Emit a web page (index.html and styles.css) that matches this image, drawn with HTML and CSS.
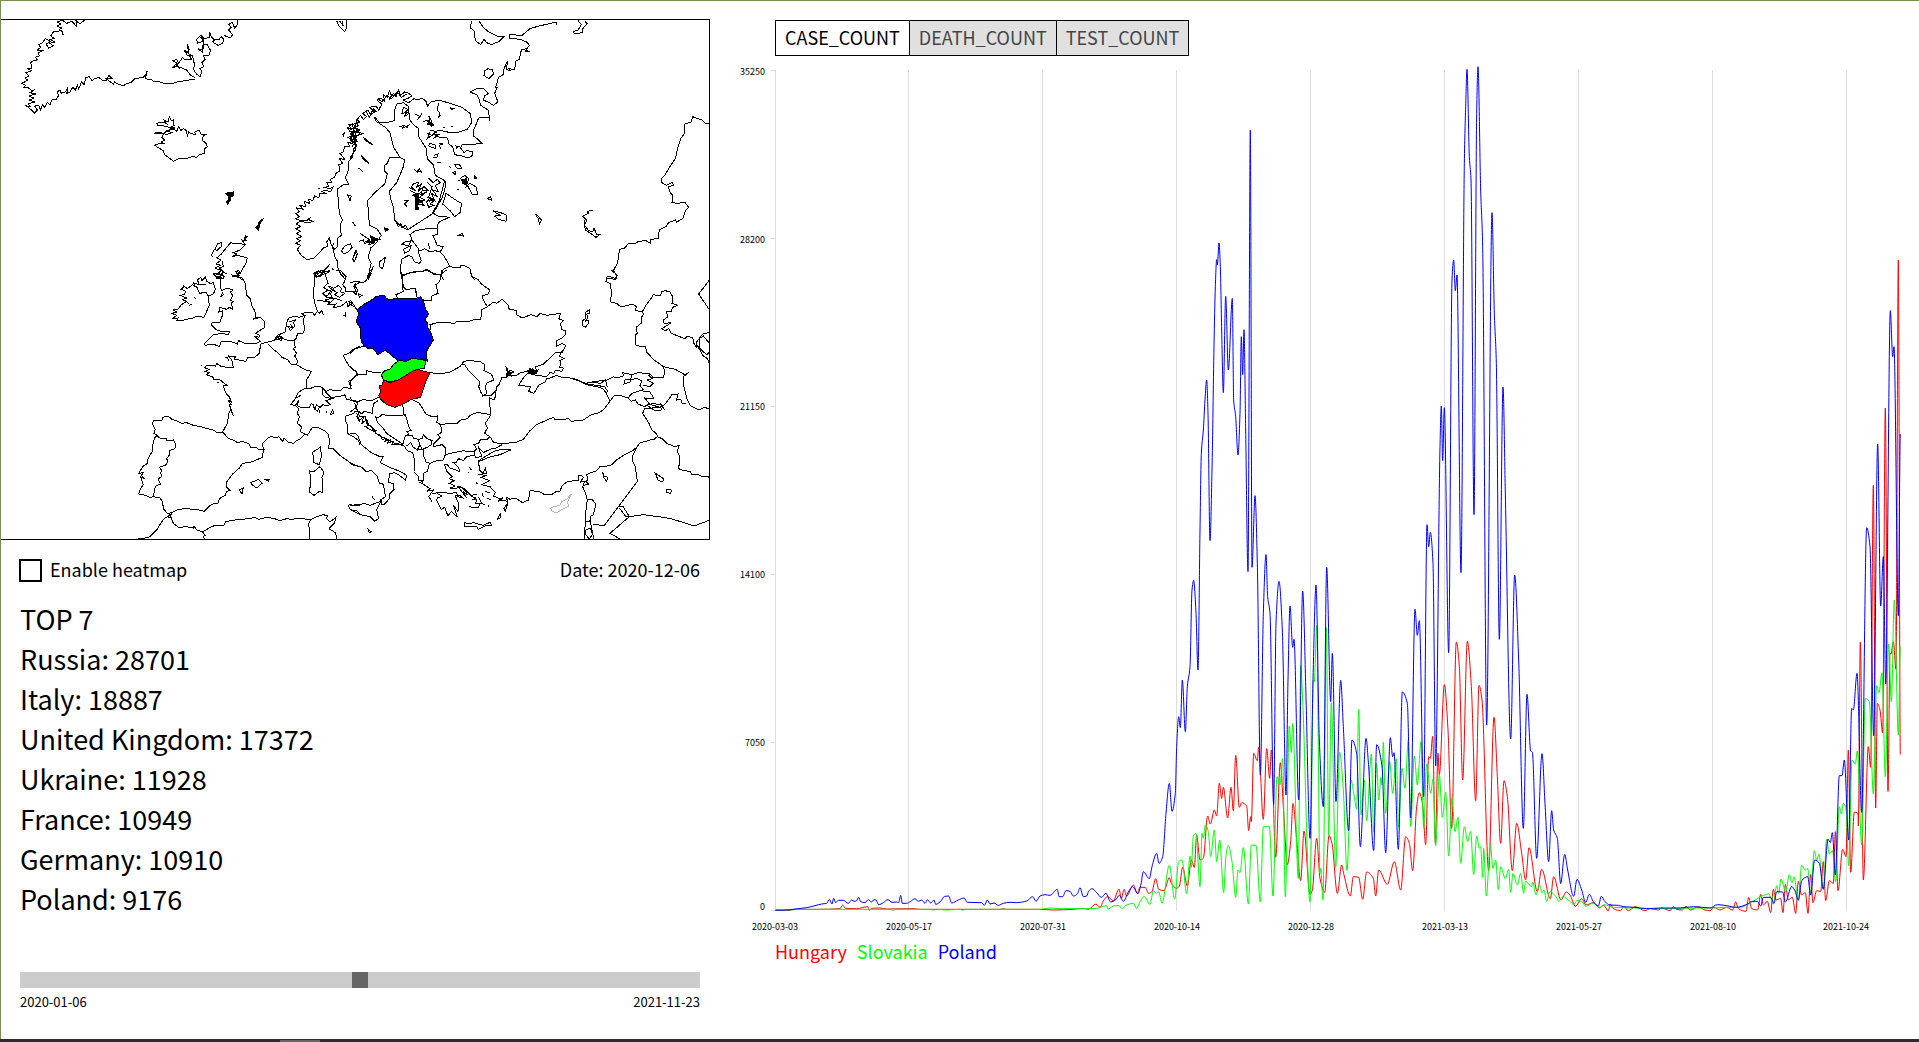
FILE: index.html
```html
<!DOCTYPE html>
<html lang="en">
<head>
<meta charset="utf-8">
<title>Epidemic map of Europe</title>
<link rel="stylesheet" href="styles.css">
</head>
<body>
<main class="layout">
  <section class="overview">
    <svg class="map" viewBox="1 19 709 521" role="img" aria-label="Map of Europe">
      <g transform="scale(.33333)">
        <path d="M256 58L240 72L228 62L230 80L216 64L200 70L186 60L172 66L184 72L170 78L186 84L176 90L188 96L190 106L184 92L160 96L152 108L164 116L148 118L166 126L150 130L160 138L146 144L138 132L152 124L136 116L128 128L116 134L122 142L112 150L128 152L114 160L118 168L106 172L112 180L100 182L92 188L96 204L84 206L94 212L78 218L86 228L74 234L84 240L66 250L76 256L72 262L86 264L96 272L106 268L90 278L108 282L86 288L102 294L88 300L104 306L84 312L92 320L80 318L92 328L104 340L112 330L104 318L116 316L122 330L128 314L134 322L142 308L150 314L156 300L168 300L176 286L172 276L180 270L184 280L196 276L204 262L200 280L210 276L218 262L226 270L232 256L236 268L244 246L252 254L258 232L268 230L276 242L284 236L296 232L306 240L318 242L326 226L336 236L318 236L340 252L344 246L356 254L372 256L382 250L392 248L404 236L430 232L436 226L442 212L436 236L456 240L462 246L480 246L496 252L516 252L530 246L540 246L552 242L584 238"/>
        <path d="M584 232L572 226L560 210L546 204L530 198L518 204L528 192L538 206L530 188L518 182L530 178L536 190L548 172L554 180L576 180L570 170L578 166L562 166L552 150L566 160L562 132L568 150L560 156L578 170L584 196L580 208L590 222L600 230L606 214L600 206L612 200L606 188L616 178L610 166L626 168L632 152L622 134L610 132L606 150L594 146L608 158L612 118L598 110L590 118L592 130L608 124L602 106L614 116L628 112L628 96L634 110L644 120L638 126L654 136L668 130L672 118L664 110L656 120L640 118M672 106L690 114L698 104L686 90L694 82L686 74L696 66L704 84L714 72L714 60M1010 62L1018 80L1034 94L1040 84L1040 60M1018 62L1030 78L1026 62"/>
        <path d="M461 400L478 396L500 404L516 398L500 392L490 400L512 388L524 384L498 380L486 376L474 378L470 370L488 366L500 372L492 360L504 366L508 350L514 362L520 360L522 376L510 384L524 390L530 394L536 380L542 392L550 386L560 392L562 410L566 396L572 400L586 404L584 396L596 390L604 404L620 402L610 408L606 420L618 430L622 440L612 448L614 460L598 464L590 472L578 470L556 476L536 476L520 484L508 474L494 464L490 452L470 440L464 436L478 430L496 432L482 426L494 420L486 412L490 402L476 400Z"/>
        <path class="solid" d="M676 580L700 576L700 588L690 590L692 600L682 614L680 606L688 594L682 586ZM788 658L778 664L774 676L766 682L776 690L780 672Z"/>
        <path d="M738 706L734 714L744 708L734 718L742 722L726 720L736 734L720 750L700 758L710 762L696 770L712 766L742 774L738 790L726 810L720 822L708 818L716 826L696 828L716 832L728 840M734 734L716 730L704 732L692 728L680 742L664 762L650 774L664 780L648 792L662 796L644 804L664 812L650 822L668 826L648 834L664 838M666 784L670 800L658 804L672 816L660 824L674 830M664 728L652 732L644 748L650 752L666 738ZM642 750L634 766L640 772"/>
        <path d="M1078 348L1072 360L1080 366L1062 372L1046 374L1054 386L1042 382L1050 394L1066 392L1050 402L1062 408L1044 412L1060 424L1044 428L1050 440L1034 440L1030 456L1020 460L1034 478L1018 476L1028 490L1016 494L1020 512L1008 520L1004 532L990 538L996 548L980 548L986 558L974 562L990 566L1000 560L992 576L976 570L966 574L980 582L960 580L956 594L944 588L938 602L926 598L928 610L914 604L916 620L900 616L910 628L890 624L898 636L888 640L898 650L886 656L904 662L920 662L934 650L926 660L938 664L926 668L900 664L888 672L902 680L888 686L902 694L890 700L904 710L890 716L902 722L888 730L902 736L892 748L904 766L920 778L940 776L960 756L970 744L984 738L980 726L988 714L994 736L1004 748L1012 740L1012 716L1024 706L1020 676L1028 660L1018 640L1014 590L1014 566L1030 554L1046 552L1036 534L1046 508L1046 484L1058 470L1060 448L1070 438L1062 420L1066 400L1080 390M1056 368L1062 396L1052 420L1070 412L1060 386L1076 376M1028 404L1034 398L1030 408ZM954 566L960 564"/>
        <path d="M1000 728L998 740L1004 770L1014 786L1012 800L1022 822L1038 840M1024 752L1036 736L1052 732L1056 744L1044 756L1032 762ZM1066 752L1058 776L1064 784L1072 760ZM1042 584L1054 588L1050 602L1046 592ZM1058 666L1066 678M990 792L972 810L950 816L942 834L964 812L976 820L958 830ZM996 806L1000 810"/>
      </g>
      <g transform="translate(350 0) scale(.33333)">
        <path d="M0 376L20 370L10 384L28 388L14 396L40 400L20 408L6 402L0 414L22 424L4 430L18 436L16 450L0 474M0 390L24 378L18 360L32 346L40 358L50 350L38 340L54 330L62 344L74 336L60 322L78 318L86 330L96 312L80 300L92 294L104 304L100 284L112 292L118 272L124 286L118 300L130 280L138 290L146 270L152 286L164 276L176 280L186 288L172 296L160 300L176 308L192 296L204 300L216 294L230 306L232 320L242 306L266 300L300 310L336 322L360 340L366 366L352 388L320 398L292 396L264 390L250 402L270 412L292 414L298 434L308 440L314 464L336 468L356 474L368 466L366 454L350 452L342 458L332 444L336 434L360 434L396 430L384 418L370 408L372 388L386 354L416 352L420 362L414 330L392 316L388 300L380 284L360 276L384 264L400 266L416 280L404 288L400 300L418 308L430 316L444 306L434 280L442 262L436 264L446 232L462 222L462 206L472 184L470 208L484 204L474 212L494 208L498 182L508 178L514 150L530 146L526 156L540 156L528 150L538 136L530 126L510 118L478 114L480 102L514 108L540 86L560 80L618 66L620 74"/>
        <path d="M8 370L24 392L4 404L20 420L6 440M14 380L30 402L12 414M84 296L96 306L110 286L124 296L142 276L154 292L170 282M48 334L58 352L70 326L80 336"/>
        <path d="M364 62L362 84L372 92L376 122L392 134L402 118L410 128L424 134L448 124L462 110L440 108L416 96L400 82L386 62M404 212L414 206L428 210L430 222L416 236L402 226ZM684 62L694 74L684 90L668 96L678 102L696 98L700 82L712 72L704 62"/>
        <path d="M1080 360L1076 372L1066 370L1056 360L1044 356L1028 350L1024 366L1004 372L1002 402L992 416L984 440L976 476L960 500L944 526L934 536L936 548L950 556L968 546L970 556L956 560L958 574L968 586L966 608L984 610L1004 606L1016 622L1006 632L998 656L980 666L976 660L956 668L948 680L928 690L924 716L900 718L902 730L888 722L866 724L852 732L834 732L824 744L808 748L806 770L802 790L790 812L800 826L796 838L768 834"/>
        <path d="M146 474L118 474L112 490L102 498L104 514L112 522L104 552L72 580L62 592L52 602L56 640L58 676L80 686L94 706L78 730L62 744L58 760L54 770L64 790L58 810L56 840M150 472L164 480L160 500L152 520L140 548L118 574L124 604L130 620L134 660L150 676L172 690L200 672L246 642L268 602L284 542L256 526L250 494L232 476L228 444L206 410L206 386L190 374L178 358L176 320L160 308L140 312L134 330L132 362L110 368L86 366L74 350L76 362L106 382L120 398L130 440L150 472"/>
        <path d="M138 668L146 680L152 670L156 684L166 676L174 688M30 700L60 720L50 724L74 728L56 734L70 712L88 718L44 730L40 720L26 724M0 730L6 742L0 748M20 752L8 776L12 786L22 764ZM288 580L320 602L334 610L332 636L314 650L300 632L278 612L284 596ZM288 544L286 560L278 590L250 640L264 648L284 650L298 652L280 660L270 664L262 674L264 686"/>
        <path class="solid" d="M194 584L206 580L204 596L220 606L202 610L206 630L196 630L198 606ZM334 540L350 536L352 550L342 552ZM62 708L84 718L66 728ZM104 684L116 688L106 694ZM302 324L312 326L304 330ZM40 412L70 436L50 424ZM32 464L56 490L40 478ZM232 362L250 372L244 378Z"/>
        <path d="M176 562L196 572L184 560L190 552L206 546L200 562L216 550L204 574L220 560L212 584L232 574L208 592L226 600L210 602L222 616L204 612M180 572L198 580L188 586L202 592M230 592L246 596L236 604L256 600L240 612L252 616L236 622L230 606L244 590M160 322L176 330L166 334L178 340L162 350L170 338L156 340ZM196 342L210 350L202 360L216 340M220 364L240 360L236 348L246 366L230 372L252 376M230 400L246 406L232 416L240 396M148 380L164 376L158 384L176 376L170 384M26 504L38 514M162 602L174 602L164 612L172 620M194 508L202 518L208 506L214 516L200 512"/>
        <path d="M266 308L262 330L270 340L264 354L272 346M208 580L220 570L234 572L222 560M236 534L250 548L262 538L270 548L256 556L266 576L248 570L262 590L244 580L254 602L236 590L246 560L232 548M240 430L258 436L256 446L236 438ZM252 466L264 462L260 474L248 472M240 390L262 396L246 404L266 404L250 416M278 382L286 384M304 378L308 380M266 430L280 432L268 436L272 446M260 486L272 488M318 438L326 440L320 444ZM330 536L344 526L356 536L348 560L360 550L380 562L382 584L366 582L352 556L336 550M324 540L330 542M320 570L326 570M314 494L328 494L336 504L322 506ZM308 518L318 514L316 524ZM298 500L304 502M374 528L380 534L374 536ZM412 596L422 590L424 600ZM428 632L452 638L470 646L468 664L446 658L434 648L450 646ZM556 642L566 650L574 660L568 674L566 658ZM728 630L712 634L716 640L698 648L710 660L704 676L716 692L728 696L732 684L740 704L752 702L738 712L722 700L706 690L702 660M326 706L338 700L340 708Z"/>
        <path d="M264 686L230 686L196 692L180 704L186 720L204 744L206 754L224 746L240 756L256 752L270 756L280 740L262 736L248 706L262 704L264 686M204 752L214 782L208 790L194 786L186 770L176 766L154 778L152 806L154 838M154 826L190 816L216 816L230 808L250 820L274 826L278 810L298 798L290 782L282 768L270 756M274 826L280 840M298 798L312 804L330 804L332 798L344 798L360 806L364 826L374 840M164 726L184 722L176 736L156 734ZM160 748L184 736L178 752L164 760ZM236 730L238 746M90 784L106 772L98 806L88 800ZM70 798L56 836L64 820"/>
      </g>
      <g transform="translate(0 270) scale(.33333)">
        <path d="M694 14L712 20L726 24L736 40L738 60L740 76L752 88L754 104L764 122L768 142L758 148L780 142L794 154L792 174L778 182L768 190L780 196L776 202L764 198L776 210L782 214L770 220L740 222L716 212L712 222L690 214L664 214L658 230L640 222L616 226L612 222L626 208L640 194L668 190L684 194L690 184L672 186L650 180L634 164L636 158L660 156L668 134L668 122L656 126L660 112L680 118L688 112L698 118L694 100L700 94L690 92L698 76L690 66L700 60L680 54L664 62L660 36L664 22L644 18L660 8L640 12L654 22L668 14L672 26L656 26L668 6L680 12M706 4L724 8L712 0M668 68L662 80L670 74Z"/>
        <path d="M548 46L562 56L578 44L590 50L596 64L600 70L618 66L624 78L640 72L646 58L640 38L630 40L620 34L616 22L606 32L602 22L592 30L598 44L580 38L586 52M596 44L618 42M624 78L626 90L628 106L620 124L612 142L590 138L578 144L552 150L530 152L534 144L518 146L530 136L516 130L532 126L518 120L534 118L544 104L558 96L548 88L560 84L540 76L552 74L558 64L544 58L552 50M568 106L576 102M584 82L586 88M552 90L566 100"/>
        <path d="M804 216L782 222L778 250L764 262L744 262L738 274L716 270L702 270L706 260L686 258L696 272L700 294L680 294L674 290L664 290L650 280L646 288L634 286L618 288L614 294L628 298L616 304L626 308L620 314L640 322L642 330L660 330L676 342L684 348L670 346L674 362L680 372L688 380L694 396L684 390L694 404L688 404L694 420L700 438L692 418L686 432L682 460L668 486L652 488L640 480L622 476L604 470L580 466L560 458L546 460L534 454L516 448L504 438L488 442L486 450L460 452L458 462L466 478L462 490L472 496L464 504L458 526L456 546L444 566L442 580L428 590L416 610L430 608L424 616L434 626L422 620L430 644L422 656L416 672L436 676L450 682L460 680L480 684L488 696L490 716L502 730L516 728L532 720L552 716L590 718L612 724L628 708L640 702L654 700L658 686L676 676L680 664L690 662L680 652L680 636L698 612L718 594L728 580L754 576L788 562L790 540L788 520L806 502L816 500L830 504L836 500L848 514L852 504L864 516L880 520L890 512L900 508L914 492L902 486L904 470L892 460L898 440L892 430L896 416L886 406M668 486L686 506L704 512L712 518L728 514L748 522L752 532L770 534L778 540L794 540M602 288L606 288M674 264L682 262M686 272L682 262M650 336L656 338"/>
        <path d="M466 494L480 504L500 506L500 512L520 510L528 526L524 536L508 542L510 552L500 566L504 576L496 586L478 592L484 600L482 610L486 618L474 628L482 642L468 648L464 656L460 680M392 810L436 804L450 800L470 780L490 748L502 740L514 732L510 744L504 740M508 728L514 744L520 760L536 772L560 770L580 774L582 768L592 782L606 784L616 796L610 800L614 810M608 786L630 772L646 766L672 766L676 756L690 752L720 748L750 746L764 742L776 748L800 742L824 746L840 752L860 746L876 748L900 744L930 750L946 742L970 734L984 738L978 744L990 756L1008 742L1004 758L990 772L990 778L1006 788L1012 810M932 750L926 760L930 800L926 810"/>
        <path d="M914 492L922 496L936 474L956 474L976 484L984 492L990 516L984 534L1000 536L1020 556L1050 578L1060 586L1080 590M962 528L960 540L966 552L958 584L942 578L938 546L956 536ZM928 602L940 606L960 590L972 606L966 622L968 668L958 664L942 676L928 666L932 640L932 620ZM752 638L776 628L786 640L770 654L758 646ZM794 628L806 634L808 628ZM718 660L730 654L726 672ZM1046 702L1058 706L1070 702L1080 704M1046 704L1048 716L1080 734M1080 426L1064 424L1062 430L1038 438L1036 450L1044 470L1042 490L1060 500L1074 510L1080 524"/>
        <path d="M804 216L826 210L832 196L856 186L860 158L866 144L886 138L896 142L914 136L904 130L936 126L944 136L952 124L958 130L966 122L970 134M952 124L944 100L940 72L944 30L942 10L956 2M914 136L910 150L914 178L908 190L892 190L890 204L882 212L886 232L880 236L890 250L884 258L892 272L890 284L874 284L864 270L846 262L836 250L820 238L804 222M826 210L846 204L860 210L882 212M890 284L910 296L918 300L934 304L920 330L918 354M868 156L886 150L880 158L884 168L872 182L864 170L878 172L870 162M824 202L844 198L828 206L846 212L836 194L848 204L822 210"/>
        <path d="M918 354L896 366L886 386L872 404L886 406L896 392L892 406L904 414L928 412L934 400L940 404L944 416L950 404L960 412L968 404L980 408L990 404L978 392L996 386L976 382L966 372L968 354L956 348L944 350L930 356L918 354M968 354L978 364L990 358L1000 362L1020 362L1032 352L1054 356L1048 340L1060 324L1074 314L1066 304L1048 290L1040 276L1030 256L1046 250L1060 238L1080 228M976 366L992 382L1016 380L1034 374L1040 388L1062 392L1080 396M996 422L990 436M998 418L1000 430L994 434M978 424L982 428M940 410L952 424L956 416L960 430M888 384L902 376M1062 390L1074 400L1066 412L1076 430L1070 440L1080 456"/>
        <path d="M942 30L946 8L962 4L964 12L950 22L944 12L990 2M990 2L976 14L984 40L970 52L984 60L968 70L980 82L996 84L976 90L990 100L1000 88L992 72L998 60L986 50L1000 52M978 58L992 62L984 76L972 78M1002 54L1016 46L1024 56L1022 66L1034 70L1018 82L1004 74L1012 68L1002 62ZM950 90L990 96L984 104L1008 102L1000 112L1020 110L1040 96L1044 110L1050 104L1046 94L1058 100L1072 120M1008 0L1020 0L1038 20L1034 34L1028 44L1036 54L1036 66L1060 66L1068 74L1074 60L1064 48L1080 36M1028 136L1034 138M1038 126L1036 142M1000 84L1026 92"/>
      </g>
      <g transform="translate(350 270) scale(.33333)">
        <path class="poland" d="M22 118L44 102L62 92L78 80L94 76L104 76L108 84L116 90L140 84L170 86L200 84L212 80L222 98L226 116L236 132L224 150L234 160L234 176L240 182L250 210L238 230L228 246L232 274L218 266L202 270L180 266L172 274L146 274L132 262L122 254L106 240L94 248L84 254L68 234L56 236L42 228L34 214L32 200L30 172L18 154L26 134Z"/>
        <path class="slovakia" d="M146 272L170 274L184 266L216 268L228 274L222 296L200 298L182 306L162 320L144 330L120 336L100 330L94 314L104 302L120 298L130 284Z"/>
        <path class="hungary" d="M100 330L120 338L144 330L162 320L182 306L202 298L222 304L240 308L232 324L224 344L212 382L184 388L160 402L134 412L110 404L94 390L86 376L92 364L88 348L98 344Z"/>
        <path d="M0 382L6 392L20 396L40 388L54 392L70 390L90 380M0 354L4 346L-4 334L4 330L20 314L48 314L50 302L72 308L94 308M0 250L12 238L30 232L44 228M0 290L20 306L24 314M14 400L24 424L36 432L42 424L68 430L68 416L72 400L84 392M14 400L20 412L0 426M20 430L28 450L40 442L36 460L50 448L56 466L46 470L70 484L64 470L78 482L76 490L92 496L96 508L110 506L104 514L120 510L112 520L130 514L126 524L144 520L160 528M0 38L18 34L40 38L50 30L56 10L62 0M0 66L18 64L12 50L18 38M24 70L36 76L28 82ZM0 90L8 98L2 104L16 112L22 122"/>
        <path d="M152 0L156 20L160 50L166 58L196 56L200 80M142 84L138 74L160 64L156 44L166 56M154 20L180 8L216 4L230 0L250 12L270 14L276 10M276 0L274 16L268 36L258 44L264 70L246 78L246 92L224 92L214 86M200 64L200 82M276 10L290 0M360 0L366 20L384 28L394 42L420 60L414 72L396 78L402 94L412 110L396 118L392 148L370 150L350 156L320 154L314 160L270 156L240 164L242 178L234 180M412 110L430 96L440 100L456 88L476 106L474 116L500 122L500 134L516 144L544 134L560 140L570 130L590 136L632 130L626 146L640 152L632 160L634 178L646 182L646 194L636 204L620 212L620 228L636 220L648 226L638 246L616 248L600 264L578 284L556 290L560 304L552 302L540 296L546 312L530 304L512 308L500 316L472 318L468 322L456 322L448 342L440 350L438 362M466 288L474 300L470 316L492 306L478 300L484 318L468 310"/>
        <path class="solid" d="M534 302L548 296L552 304L564 300L558 312L544 308ZM468 298L478 308L488 306L478 316Z"/>
        <path d="M242 308L256 310L280 310L300 306L330 290L340 276L352 272L390 274L404 284L402 302L424 312L432 330L412 338L406 348L410 370L400 378L424 376L438 362L434 390L420 384L420 410L422 436L406 460L412 474L404 490L420 500L430 516L454 522L500 516L520 508L540 482L560 464L600 446L610 442L616 450L640 448L656 446L664 454L700 450L724 434L742 430L760 420L780 394L772 378L770 370L758 356L740 350L716 346L700 340L680 328L660 324L640 324L620 316L600 324L590 326L586 336L566 346L552 370L536 364L542 350L506 346L520 324L532 310L544 312L560 316L590 320L600 308L612 310L616 300L636 304L640 294L628 292L632 286L630 272L642 266L628 258L634 246L640 240M332 284L344 284L356 302L370 316L390 336L386 350L392 366L400 378"/>
        <path d="M184 388L208 400L228 432L246 440L262 438L264 450L258 456L272 464L300 460L320 462L332 450L352 446L360 436L380 428L404 430L422 436M272 464L276 486L264 494L270 502L262 510L250 522L250 530L276 524L286 534L286 554L320 546L340 542L360 546L372 544L380 536L372 524L386 520L392 508L412 508L420 500M154 402L162 416L160 432L168 440L176 470L184 482L170 484L176 492L166 498L158 524L140 524L110 506L84 496L64 470L50 460L46 440L28 440L24 424M76 440L84 444L96 434L130 438L168 434M76 440L84 460L96 470L110 490L160 524M166 498L186 496L190 504L204 508L210 524L202 540L188 530L182 518L170 528M204 508L216 506L220 494L232 506L246 512L244 524L232 532L216 538L210 524M160 524L172 542L188 548L194 570L192 606L206 620L204 632L220 630L216 640L240 656L230 664L250 660L236 680L246 694M246 672L262 668L280 666L300 672L320 666L322 680L338 684L330 676L316 678L326 700L324 724L310 706L322 742L304 724L294 738L284 712L274 718L260 690L262 684L276 678L260 670M202 540L220 540L222 560L228 576L240 580L260 572L280 570L286 554M238 580L232 604L220 610L220 632L206 640"/>
        <path d="M372 556L350 560L340 572L326 566L318 578L310 578L326 592L328 604L300 594L292 584L284 584L290 604L306 620L298 626L312 632L298 640L316 648L300 654L318 656L330 650L346 662L352 676L340 664L350 684L324 650L340 654L350 664L366 680L378 684L366 690L380 690L376 700L396 700L384 680M358 590L364 600M354 606L358 610M378 638L384 642M356 710L384 714L392 698M396 670L400 680M398 706L406 702M366 676L380 672M404 664L420 668M412 684L422 690M414 706L418 710M372 544L376 562L396 560L384 530L400 548L420 538L438 534L456 524M388 574L416 562L450 554L482 540L456 538L432 544L412 556L386 572L388 600L398 610L406 596L410 610L384 614L412 616L394 622L418 632L396 644L420 650L436 668L430 678L450 686L444 696L460 682L450 690L472 694L470 682L480 688L496 684L518 698L536 690L540 662L566 664L584 674L604 674L620 664L630 664L636 648L650 636L670 632L686 630L684 618L694 616L700 622L692 636L704 634L698 650L706 668L712 690L708 720L706 760L702 808M344 758L356 762L370 758L400 766L422 756L424 766L404 768L384 778L380 770L344 770ZM474 698L462 716L466 724ZM452 730L442 748L450 744Z"/>
        <path d="M0 490L18 492L24 498L34 524L64 548L90 560L100 560L90 578L118 592L150 604L170 616L166 630L148 616L132 608L118 612L116 638L130 640L132 658L118 672L120 684L104 702L96 704L92 690L106 680L104 660L98 640L88 640L80 616L64 602L48 604L36 592L16 586L0 578M0 706L28 706L40 700L60 706L92 694L80 718L86 746L74 754L60 740L30 734L20 722L4 722L0 716M54 778L64 786L58 788ZM66 680L74 690"/>
        <path d="M712 690L728 690L738 704L730 734L722 738L722 760L728 790L732 808M708 756L722 752M708 780L720 774L728 792L718 808L708 794ZM730 762L762 768L862 634L858 606L856 590L846 570L848 556L862 530L848 542L820 556L800 570L786 584L772 588L750 590L740 602L722 608L710 614L714 630L708 634L716 642L700 646M862 530L868 520L880 516L900 510L912 508L922 500L920 492L906 480L896 458L878 430L884 416L930 412M922 500L936 506L950 520L974 530L988 526L982 544L990 560L986 596L1000 602L1020 604L1026 614L1040 612L1056 620L1074 620L1080 626M806 710L818 708L838 740L826 738L808 714M838 740L880 734L940 742L970 748L1032 768L1080 750M838 740L780 790L812 808M700 812L734 812"/>
        <path d="M660 324L714 342L764 350L772 362L770 372M712 338L740 334L770 330L790 320L800 324L820 318L818 308L846 314L870 306L880 312L896 310L904 316L910 324L940 324L944 306L940 290M720 336L752 340L766 330L772 350M780 394L792 378L810 376L834 384L846 370L870 362L880 360L870 346L876 334L862 326L824 330L822 342L840 336L846 314M834 384L844 394L856 390L864 402L884 410L896 402L930 412L944 404L966 374L984 372L980 390L992 388L996 400L1008 400M870 362L900 366L912 386L884 384L900 404M880 346L900 350L910 340L890 330L908 326L896 316M890 406L908 400L940 406L934 420L916 422ZM930 400L944 420"/>
        <path d="M784 0L802 16L798 26L772 18L768 34L782 42L784 68L782 96L800 100L812 110L826 108L846 102L860 110L856 120L870 126L878 122L880 134L874 142L876 158L858 172L862 190L856 196L856 224L872 230L886 230L890 246L910 268L940 290L976 298L1004 314L1016 308L1002 318L1000 334L1002 350L1008 376L1012 390L1020 406L1048 420L1064 412L1080 418M876 128L888 106L900 90L910 74L932 78L934 66L946 62L960 66L968 80L966 100L982 106L968 112L964 124L948 126L954 140L940 150L942 160L964 158L936 176L946 182L956 176L964 190L984 198L1004 206L1010 200L1028 202L1032 220L1040 232L1040 216L1060 190L1080 188M1080 284L1072 266L1058 256L1040 222M1080 222L1060 198L1050 204L1048 230L1054 240L1070 254L1080 244M1080 28L1046 72L1080 122M720 118L706 128L708 144L698 152L698 168L706 172L716 160L716 150L706 154L714 142L710 132L720 130ZM916 610L938 624L942 630L936 636L924 630ZM950 658L964 660L962 670L950 668ZM758 606L762 618L774 622L770 634L762 624Z"/>
        <path class="faint" d="M602 714L612 710L630 706L636 694L650 688L664 672L652 698L656 708L640 716L620 728L606 724Z"/>
      </g>
      <path d="M1 19.500H709.500V539.500H1"/>
    </svg>

    <div class="map-options">
      <label class="heatmap"><input class="heatmap-box" type="checkbox">Enable heatmap</label>
      <span>Date: 2020-12-06</span>
    </div>

    <section class="ranking">
      <h2 class="ranking-title">TOP 7</h2>
      <ol class="ranking-list">
        <li>Russia: 28701</li>
        <li>Italy: 18887</li>
        <li>United Kingdom: 17372</li>
        <li>Ukraine: 11928</li>
        <li>France: 10949</li>
        <li>Germany: 10910</li>
        <li>Poland: 9176</li>
      </ol>
    </section>

    <div class="timeline">
      <input class="timeline-slider" type="range" min="0" max="100" value="50" aria-label="Date">
      <div class="timeline-ends"><span>2020-01-06</span><span>2021-11-23</span></div>
    </div>
  </section>

  <section class="statistics">
    <div class="tabs">
      <button class="tab tab-active" type="button">CASE_COUNT</button>
      <button class="tab" type="button">DEATH_COUNT</button>
      <button class="tab" type="button">TEST_COUNT</button>
    </div>
    <svg class="chart" viewBox="710 56 1209 881" role="img" aria-label="Daily cases">
      <path class="grid" d="M775.500 70V911M908.500 70V911M1042.500 70V911M1176.500 70V911M1310.500 70V911M1444.500 70V911M1578.500 70V911M1712.500 70V911M1846.500 70V911M771 70.500H775M771 238.500H775M771 406.500H775M771 574.500H775M771 742.500H775M771 910.500H775"/>
      <g class="y-labels">
        <text x="765" y="75">35250</text><text x="765" y="243">28200</text><text x="765" y="410">21150</text>
        <text x="765" y="578">14100</text><text x="765" y="746">7050</text><text x="765" y="910">0</text>
      </g>
      <g class="x-labels">
        <text x="775" y="930">2020-03-03</text><text x="909" y="930">2020-05-17</text><text x="1043" y="930">2020-07-31</text>
        <text x="1177" y="930">2020-10-14</text><text x="1311" y="930">2020-12-28</text><text x="1445" y="930">2021-03-13</text>
        <text x="1579" y="930">2021-05-27</text><text x="1713" y="930">2021-08-10</text><text x="1846" y="930">2021-10-24</text>
      </g>
      <path class="series series-hungary" id="hungary"/>
      <path class="series series-slovakia" id="slovakia"/>
      <path class="series series-poland" id="poland"/>
    </svg>
    <ul class="legend">
      <li class="legend-hungary">Hungary</li>
      <li class="legend-slovakia">Slovakia</li>
      <li class="legend-poland">Poland</li>
    </ul>
  </section>
</main>
<footer class="dock"><span class="dock-item"></span></footer>
<script src="chart.js"></script>
</body>
</html>
```
FILE: styles.css
```css
* { box-sizing: border-box; }

body {
  margin: 0;
  min-height: 100vh;
  display: flex;
  flex-direction: column;
  background: #fff;
  color: #000;
  font-family: "Noto Sans CJK SC", "Noto Sans", sans-serif;
  font-size: 18px;
  line-height: 20px;
}

.layout {
  flex: 1;
  display: grid;
  grid-template-columns: minmax(0, 709fr) minmax(0, 1209fr);
  border-top: 1px solid #789058;
  border-left: 1px solid #789058;
}

.overview { padding-top: 18px; }

.map { display: block; width: 100%; }
.map path {
  fill: none;
  stroke: #000;
  stroke-width: 1px;
  vector-effect: non-scaling-stroke;
  shape-rendering: crispEdges;
}
.map .solid { fill: #000; }
.map .poland { fill: #00f; }
.map .slovakia { fill: #0f0; }
.map .hungary { fill: #f00; }
.map .faint { stroke: #bbb; }

.map-options {
  display: flex;
  justify-content: space-between;
  align-items: flex-start;
  margin: 19px 10px 0 18px;
}
.heatmap { display: flex; align-items: flex-start; gap: 8px; }
.heatmap-box {
  appearance: none;
  width: 23px;
  height: 23px;
  margin: 0;
  border: 2px solid #000;
  background: #fff;
}
.heatmap-box:checked { background: #666; }

.ranking {
  margin: 17px 19px 0;
  font-size: 27px;
  line-height: 40px;
}
.ranking-title { margin: 0; font-size: 27px; font-weight: 400; }
.ranking-list { margin: 0; padding: 0; list-style: none; }

.timeline { margin: 53px 10px 0 19px; }
.timeline-slider {
  display: block;
  appearance: none;
  width: 100%;
  height: 16px;
  margin: 0;
  background: #ccc;
}
.timeline-slider::-webkit-slider-thumb {
  appearance: none;
  width: 16px;
  height: 16px;
  background: #666;
}
.timeline-ends {
  display: flex;
  justify-content: space-between;
  margin-top: 4px;
  font-size: 13px;
}

.statistics { padding-top: 19px; }
.tabs { display: flex; margin-left: 65px; }
.tab {
  height: 36px;
  margin: 0 -1px 0 0;
  padding: 0 9px 2px;
  border: 1px solid #000;
  background: #e0e0e0;
  color: #444;
  font: inherit;
}
.tab-active { background: #fff; color: #000; }

.chart { display: block; width: 100%; font-size: 9px; }
.grid { fill: none; stroke: #ddd; }
.y-labels { text-anchor: end; }
.x-labels { text-anchor: middle; }
.series { fill: none; stroke-width: 1px; }
.series-hungary { stroke: #f00; }
.series-slovakia { stroke: #0f0; }
.series-poland { stroke: #00f; }

.legend {
  display: flex;
  gap: 10px;
  margin: 0 0 0 65px;
  padding: 0;
  list-style: none;
  line-height: 28px;
}
.legend-hungary { color: #f00; }
.legend-slovakia { color: #0f0; }
.legend-poland { color: #00f; }

.dock { height: 3px; padding: 1px 0 0 280px; background: #2e2b2e; }
.dock-item { display: block; width: 40px; height: 2px; background: #666; }
```
FILE: chart.js
```js
// Each series is split in three periods; every period has its own origin and
// holds x,y pairs in thirds of a chart unit.
const origins = [[740, 840], [1080, 480], [1480, 680]];

const series = {
  poland: [
    "106,211 150,209 175,206 200,203 225,197 245,192 260,190 268,178 276,192 281,175 287,188 295,181 310,181 325,190 335,180 342,184 350,182 356,172 362,185 375,188 385,179 395,186 402,179 408,180 416,194 430,188 444,179 456,187 470,186 476,188 482,166 487,190 500,190 512,184 525,176 535,184 545,180 555,190 562,179 572,189 582,180 587,193 600,186 614,169 626,168 635,189 655,180 672,174 682,187 725,188 733,196 742,180 750,192 762,189 775,196 790,190 810,187 830,188 860,183 878,170 888,184 900,168 915,164 930,166 952,148 957,170 968,170 978,152 990,154 1000,168 1012,162 1020,143 1030,170",
    "20,1248 26,1234 36,1226 50,1238 64,1252 78,1240 92,1266 106,1260 118,1246 130,1264 145,1236 158,1220 174,1241 183,1212 190,1175 208,1196 216,1160 230,1120 237,1150 248,1130 258,1000 268,910 276,994 286,940 290,800 296,710 301,743 307,600 316,755 322,620 330,560 336,330 341,301 348,400 354,570 360,150 364,-80 370,-150 375,-240 380,-300 384,-200 390,182 396,-30 402,-400 406,-580 410,-661 412,-645 417,-711 421,-640 425,-450 430,-262 437,-551 445,-330 457,-545 461,-240 467,-190 474,-75 480,-200 484,-430 488,-316 492,-451 497,-150 504,275 511,-1050 516,262 525,47 532,250 541,885 550,400 558,224 563,350 570,400 581,973 588,430 597,304 607,450 618,945 624,600 630,378 638,502 642,478 656,960 668,333 678,650 690,1075 699,600 708,315 718,780 730,980 740,262 752,665 757,520 768,965 782,601 790,740 806,1052 816,780 830,820 841,1100 858,775 866,860 881,1112 890,794 906,858 917,1118 931,773 938,830 942,818 955,1108 967,636 982,670 992,1014 1005,388 1012,466 1018,422 1031,950 1041,134 1046,200 1051,157 1059,250 1067,857 1080,-100 1084,-222 1088,-58 1093,-217 1106,518 1116,-600 1121,-660 1126,-568 1131,-615 1143,278 1153,-950 1157,-1120 1161,-1232 1168,-970 1173,-900 1182,104 1190,-1100 1194,-1240 1202,-870 1208,-700 1220,735 1236,-802 1243,-500 1249,-350 1258,478",
    "69,-879 76,-560 92,177 104,-315 116,-60 130,445 141,43 152,213 157,216 170,535 186,221 195,370 206,545 215,392 221,450 232,475 242,611 254,523 263,570 281,649 291,598 305,630 317,667 328,643 340,665 355,678 364,649 375,665 390,675 415,676 430,680 465,682 500,686 540,684 600,684 640,680 690,684 712,674 740,677 768,682 805,671 815,664 832,664 842,678 850,652 872,652 882,670 890,635 908,636 916,666 935,620 944,630 955,660 965,602 983,590 992,645 1004,540 1018,550 1030,627 1044,477 1051,488 1057,458 1066,585 1078,287 1086,287 1093,240 1106,480 1115,85 1120,90 1131,-20 1145,397 1160,-457 1170,-400 1181,167 1193,-708 1202,-222 1210,-370 1217,12 1231,-1108 1238,-970 1242,-1000 1255,-193 1261,-738"
  ],
  hungary: [
    "106,211 112,209 120,211 150,211 160,208 230,208 300,206 308,195 316,205 350,206 383,200 388,211 395,205 420,204 440,207 520,206 540,208 600,208 780,208 790,206 800,208 900,208 940,210 1000,208 1030,205 1045,208 1068,192 1080,202 1090,183 1102,170 1120,182 1137,147 1144,176 1152,148 1160,168 1180,135 1192,160 1200,142 1215,142 1226,160 1236,155 1247,116 1256,148 1272,152 1288,113 1294,130",
    "290,1225 298,1218 308,1162 322,1218 334,1140 343,1162 350,1066 360,1140 370,1135 383,1008 391,1032 403,990 410,1008 418,910 425,955 430,922 443,1014 453,922 460,992 467,826 478,982 485,968 500,978 506,1052 512,1010 514,1025 521,820 532,842 536,802 550,1018 560,806 569,895 574,810 587,1132 601,848 610,980 622,1154 632,1085 639,970 650,1080 662,1202 672,1053 690,1243 697,1230 710,1075 720,1195 734,1237 747,1067 756,1090 772,1240 785,1155 792,1185 811,1248 820,1190 836,1192 848,1258 860,1176 880,1195 887,1248 896,1170 922,1213 943,1145 962,1230 977,1070 988,1090 998,1172 1010,980 1018,938 1028,975 1037,1094 1046,830 1051,835 1058,769 1066,1090 1074,820 1078,884 1093,614 1104,750 1115,1045 1129,486 1138,560 1148,900 1162,484 1174,620 1187,962 1197,616 1206,660 1226,1172",
    "42,112 52,290 62,490 72,302 82,350 97,572 110,430 125,520 137,600 147,503 172,635 185,568 211,656 221,590 243,660 259,636 270,645 286,679 305,656 318,675 340,668 359,684 371,676 385,693 391,672 400,686 422,692 431,680 445,692 466,680 495,692 510,686 535,690 545,684 570,692 580,680 590,688 607,690 617,679 632,690 655,680 675,690 690,692 702,682 720,690 740,682 758,690 767,666 775,686 798,694 806,652 815,686 833,690 842,643 850,675 862,664 872,698 880,628 888,660 902,655 909,698 916,614 925,660 937,652 947,700 955,604 965,645 976,638 984,700 992,583 999,668 1010,632 1022,634 1030,545 1037,662 1048,602 1060,610 1066,455 1074,632 1088,508 1098,530 1105,210 1112,577 1123,396 1134,400 1135,438 1141,-114 1150,600 1165,200 1172,262 1180,-584 1187,384 1192,70 1200,90 1208,158 1216,-816 1224,334 1230,-80 1233,-78 1240,-115 1248,-32 1255,-1260 1261,224"
  ],
  slovakia: [
    "106,211 112,210 150,210 180,208 300,208 400,208 450,208 460,211 466,208 570,208 580,210 590,208 620,210 660,208 668,211 675,208 900,208 930,204 960,206 1040,206 1070,205 1100,197 1104,207 1120,198 1135,196 1147,206 1158,196 1180,190 1190,206 1200,185 1213,170 1230,193 1240,153 1250,160 1256,155 1266,190 1288,76",
    "284,1257 296,1145 306,1140 320,1242 330,1128 334,1162 340,1068 348,1060 360,1220 366,1060 370,1075 376,1035 385,1055 392,1130 403,1050 410,1145 419,1080 431,1238 438,1125 445,1097 456,1145 467,1252 474,1170 480,1178 490,1103 505,1271 514,1095 528,1096 541,1266 550,1040 568,1040 579,1248 591,890 600,915 608,836 616,1250 628,738 634,818 638,730 655,1195 662,556 668,660 690,1266 700,600 703,605 710,436 720,1180 722,1165 729,1260 739,443 746,1067 754,668 767,1162 779,817 790,930 801,1172 813,900 822,945 830,988 836,688 843,1005 853,900 860,1022 874,822 881,1055 890,850 896,960 903,892 906,915 910,787 917,1000 929,845 938,940 949,836 956,1042 966,865 975,925 985,780 992,1040 1003,828 1012,915 1023,785 1031,1045 1040,852 1052,940 1059,898 1067,1097 1078,884 1087,1012 1097,937 1106,1128 1116,953 1125,1055 1134,1012 1142,1150 1153,1040 1163,1085 1172,1054 1181,1184 1190,1068 1198,1105 1202,1100 1208,1192 1211,1105 1219,1248 1231,1093 1239,1165 1247,1140",
    "55,628 62,560 76,596 86,568 92,637 99,580 112,615 122,580 131,640 137,604 155,620 158,606 168,645 178,614 186,638 192,630 200,664 210,635 228,650 236,664 248,650 270,664 282,674 290,662 305,664 317,679 338,670 360,682 372,674 400,682 460,684 540,686 650,684 700,684 740,682 780,682 810,670 842,650 866,642 880,672 890,617 896,640 903,597 917,635 928,584 936,608 942,590 955,662 965,556 976,570 983,565 992,640 1003,512 1010,540 1017,522 1030,630 1040,478 1048,522 1058,512 1067,605 1078,380 1084,402 1090,370 1098,385 1106,557 1116,240 1126,252 1132,213 1145,495 1156,55 1168,65 1180,342 1190,17 1197,38 1206,-22 1216,290 1226,-108 1234,65 1243,-240 1255,165 1261,-100"
  ]
};

function readPoints(periods) {
  return periods.flatMap((period, i) => period.split(" ").map(pair => {
    const [x, y] = pair.split(",").map(Number);
    return [origins[i][0] + x / 3, origins[i][1] + y / 3];
  }));
}

// Monotone cubic curve: flat at every peak and trough.
function curve(points) {
  const slope = i => (points[i + 1][1] - points[i][1]) / (points[i + 1][0] - points[i][0]);
  const tangents = points.map((p, i) => {
    if (i === 0 || i === points.length - 1) return 0;
    const a = slope(i - 1);
    const b = slope(i);
    return a * b <= 0 ? 0 : 2 * a * b / (a + b);
  });
  let d = "M" + points[0].join(" ");
  for (let i = 1; i < points.length; i++) {
    const [x0, y0] = points[i - 1];
    const [x1, y1] = points[i];
    const h = (x1 - x0) / 3;
    d += "C" + [x0 + h, y0 + tangents[i - 1] * h, x1 - h, y1 - tangents[i] * h, x1, y1]
      .map(v => v.toFixed(2)).join(" ");
  }
  return d;
}

for (const [name, periods] of Object.entries(series)) {
  document.getElementById(name).setAttribute("d", curve(readPoints(periods)));
}
```
